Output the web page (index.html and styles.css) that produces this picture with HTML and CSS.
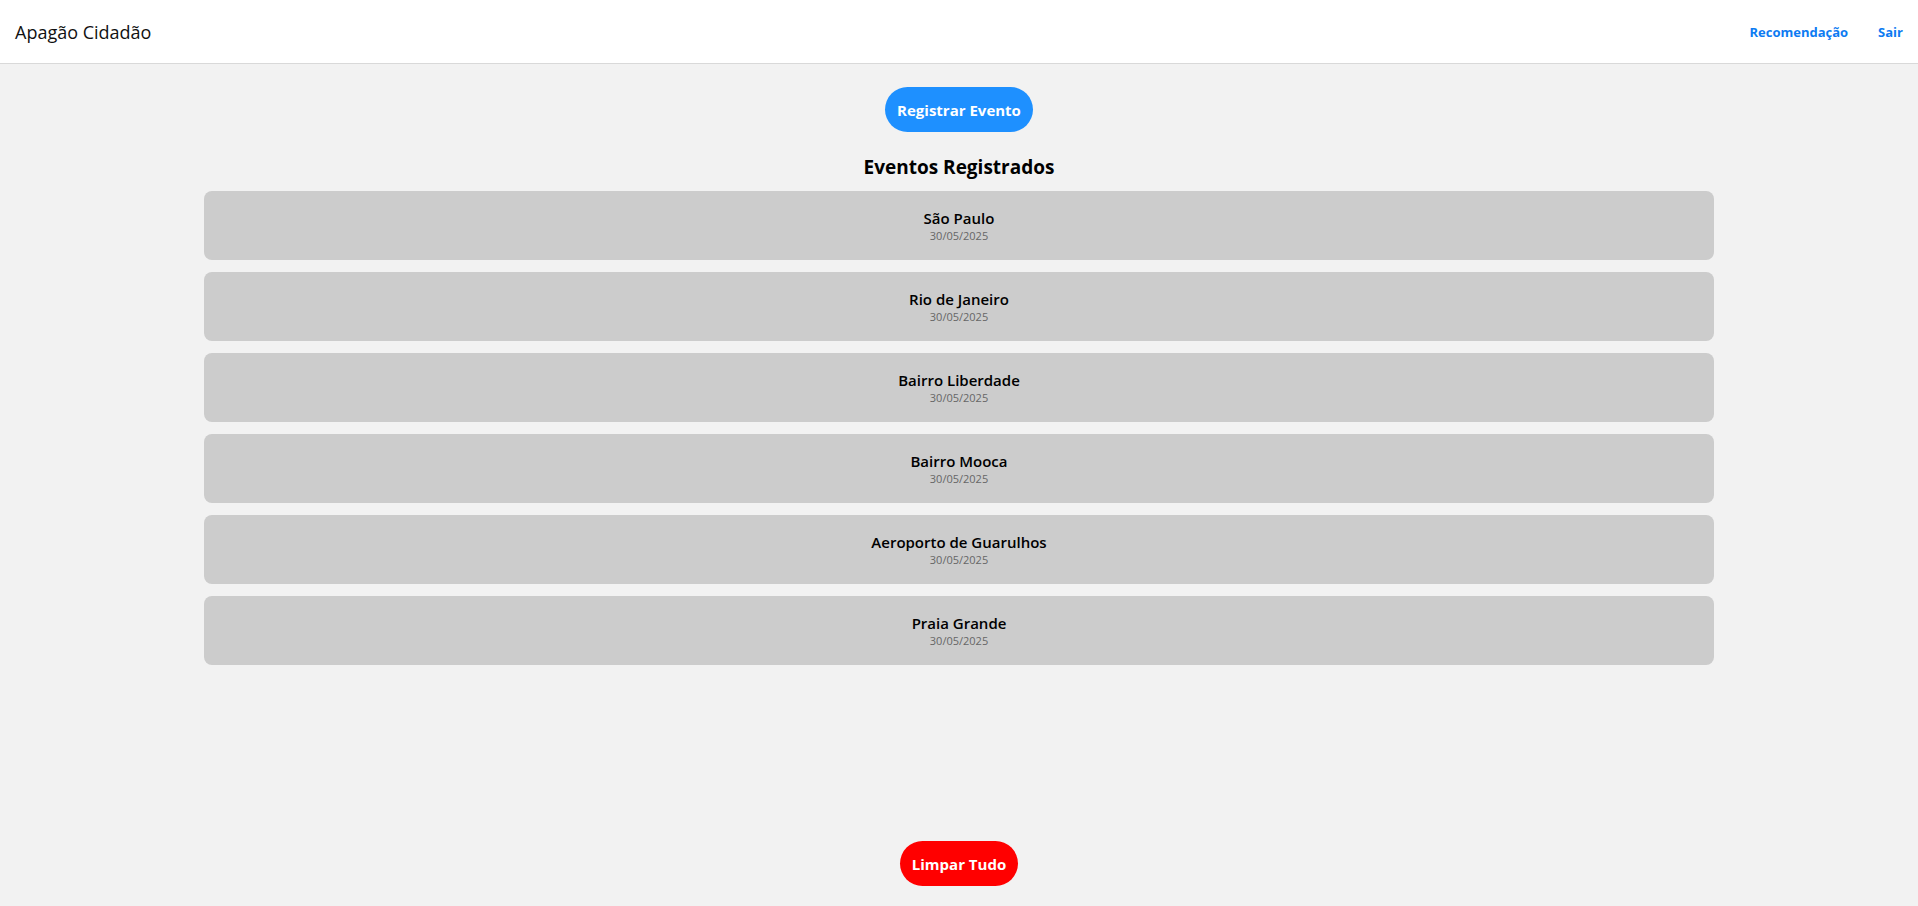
FILE: index.html
```html
<!DOCTYPE html>
<html lang="pt-BR">
<head>
<meta charset="utf-8">
<title>Apagão Cidadão</title>
<link rel="stylesheet" href="styles.css">
</head>
<body>
<div class="page">
  <header class="topbar">
    <div class="brand">Apagão Cidadão</div>
    <nav class="nav">
      <a href="#" class="nav-link">Recomendação</a>
      <a href="#" class="nav-link">Sair</a>
    </nav>
  </header>
  <main class="main">
    <button class="btn btn-blue">Registrar Evento</button>
    <h2 class="title">Eventos Registrados</h2>
    <ul class="list">
      <li class="card"><div class="card-name">São Paulo</div><div class="card-date">30/05/2025</div></li>
      <li class="card"><div class="card-name">Rio de Janeiro</div><div class="card-date">30/05/2025</div></li>
      <li class="card"><div class="card-name">Bairro Liberdade</div><div class="card-date">30/05/2025</div></li>
      <li class="card"><div class="card-name">Bairro Mooca</div><div class="card-date">30/05/2025</div></li>
      <li class="card"><div class="card-name">Aeroporto de Guarulhos</div><div class="card-date">30/05/2025</div></li>
      <li class="card"><div class="card-name">Praia Grande</div><div class="card-date">30/05/2025</div></li>
    </ul>
  </main>
  <footer class="footer">
    <button class="btn btn-red">Limpar Tudo</button>
  </footer>
</div>
</body>
</html>
```
FILE: styles.css
```css
* { box-sizing: border-box; }
html, body { margin: 0; padding: 0; }
body {
  background: #f2f2f2;
  font-family: "Open Sans", "Noto Sans", sans-serif;
  color: #000;
}
.page {
  min-height: 100vh;
  display: flex;
  flex-direction: column;
}
.topbar {
  height: 64px;
  background: #fff;
  border-bottom: 1px solid #d9d9d9;
  display: flex;
  align-items: center;
  justify-content: space-between;
  padding: 0 15px;
}
.brand {
  font-size: 18px;
  color: #111;
}
.nav {
  display: flex;
  gap: 30px;
}
.nav-link {
  color: #0d7bf2;
  font-weight: 700;
  font-size: 13px;
  text-decoration: none;
}
.main {
  display: flex;
  flex-direction: column;
  align-items: center;
  padding: 23px 204px 0;
}
.btn {
  border: none;
  color: #fff;
  font-family: inherit;
  font-weight: 700;
  font-size: 15px;
  border-radius: 23px;
  height: 45px;
  padding: 0 12px;
  cursor: pointer;
}
.btn-blue { background: #1e90ff; }
.btn-red { background: #ff0000; }
.title {
  margin: 22px 0 11px;
  font-size: 19px;
  font-weight: 700;
  line-height: 26px;
}
.list {
  list-style: none;
  margin: 0;
  padding: 0;
  width: 100%;
  display: flex;
  flex-direction: column;
  gap: 12px;
}
.card {
  background: #cccccc;
  border-radius: 8px;
  height: 69px;
  display: flex;
  flex-direction: column;
  align-items: center;
  justify-content: center;
}
.card-name {
  font-size: 15px;
  font-weight: 600;
  line-height: 20px;
}
.card-date {
  font-size: 11px;
  color: #666;
  line-height: 16px;
}
.footer {
  margin-top: auto;
  display: flex;
  justify-content: center;
  padding-bottom: 20px;
}
```
